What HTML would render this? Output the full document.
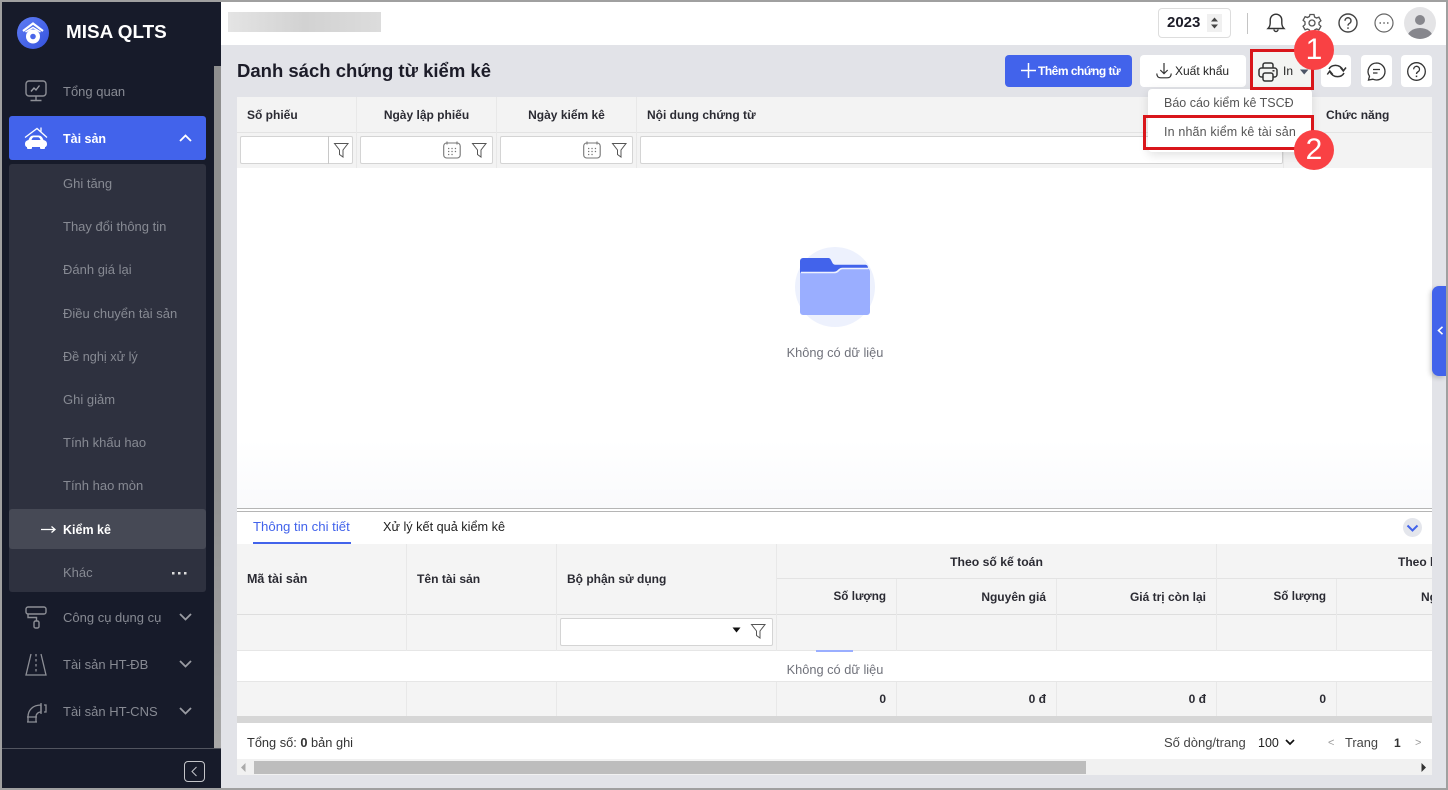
<!DOCTYPE html>
<html lang="vi"><head><meta charset="utf-8"><title>MISA QLTS</title>
<style>
*{box-sizing:border-box}
html,body{margin:0;padding:0;width:1448px;height:790px;overflow:hidden;background:#e2e3e8;font-family:"Liberation Sans",sans-serif;font-size:12.5px;color:#2a2a35}
.a{position:absolute}
.t{position:absolute;white-space:nowrap;line-height:16px}
.b{font-weight:700}
.m{color:#878a93;font-size:13px}
.h{font-weight:700;color:#2b2b33;font-size:12px}
.r{text-align:right}
.c{text-align:center}
svg{position:absolute;overflow:visible}
.inp{position:absolute;background:#fff;border:1px solid #d4d4d4;border-radius:2px;height:28px}
.btn{position:absolute;background:#fff;border-radius:4px;height:32px}
.v{position:absolute;width:1px;background:#e8e8e8}
.ln{position:absolute;height:1px;background:#e3e3e3}
</style></head><body>
<!-- topbar -->
<div class="a" style="left:221px;top:2px;width:1225px;height:43px;background:#fff"></div>
<div class="a" style="left:228px;top:12px;width:153px;height:20px;background:linear-gradient(90deg,#e4e4e4,#d2d2d2 50%,#dcdcdc)"></div>
<div class="a" style="left:1158px;top:8px;width:73px;height:30px;border:1px solid #ddd;border-radius:4px;background:#fff"></div>
<div class="t b" style="left:1167px;top:15px;font-size:15px;color:#1d1d28">2023</div>
<div class="a" style="left:1207px;top:14px;width:15px;height:18px;background:#f0f0f0"></div>
<svg style="left:1207px;top:14px" width="15" height="18"><path d="M7.500 3.500L11 7.500H4zM7.500 14.500L11 10.500H4z" fill="#444"/></svg>
<div class="a" style="left:1247px;top:13px;width:1px;height:21px;background:#c4c4c4"></div>
<svg style="left:1266px;top:12px" width="20" height="22" fill="none" stroke="#333" stroke-width="1.400"><path d="M2 16.500c1.500-1.500 2.200-3 2.200-5.500V8a5.800 5.800 0 0 1 11.600 0v3c0 2.500.7 4 2.200 5.500z"/><path d="M8 17.500a2 2 0 0 0 4 0" /></svg>
<svg style="left:1302px;top:13px" width="20" height="20" fill="none" stroke="#555" stroke-width="1.300"><path d="M8 1.500h4l.6 2.500 1.900 1 2.400-.8 2 3.500-1.900 1.700v2.200l1.900 1.700-2 3.500-2.400-.8-1.900 1-.6 2.500H8l-.6-2.500-1.900-1-2.400.8-2-3.500 1.900-1.700V8.900L1.100 7.200l2-3.500 2.400.8 1.900-1z"/><circle cx="10" cy="10" r="3"/></svg>
<svg style="left:1338px;top:13px" width="20" height="20" fill="none" stroke="#444" stroke-width="1.400"><circle cx="10" cy="10" r="9"/><path d="M7 7.800a3 3 0 1 1 4.600 2.500c-1 .6-1.600 1.100-1.600 2.300"/><path d="M10 14.400v1.400" stroke-width="1.600"/></svg>
<svg style="left:1374px;top:13px" width="20" height="20" fill="none" stroke="#666" stroke-width="1.200"><circle cx="10" cy="10" r="9"/><path d="M5.500 10h1.500M9.300 10h1.500M13 10h1.500" stroke-width="1.500"/></svg>
<svg style="left:1404px;top:7px" width="32" height="32"><defs><clipPath id="av"><circle cx="16" cy="16" r="16"/></clipPath></defs><circle cx="16" cy="16" r="16" fill="#e4e4e6"/><g clip-path="url(#av)" fill="#87878d"><circle cx="16" cy="13" r="5"/><ellipse cx="16" cy="31" rx="13" ry="10"/></g></svg>

<!-- toolbar -->
<div class="t b" style="left:237px;top:61px;font-size:18.500px;line-height:20px;color:#1c1c28">Danh sách chứng từ kiểm kê</div>
<div class="a" style="left:1005px;top:55px;width:127px;height:32px;background:#4263eb;border-radius:4px"></div>
<svg style="left:1021px;top:63px" width="15" height="15" fill="none" stroke="#fff" stroke-width="1.500"><path d="M7.500 0v15M0 7.500h15"/></svg>
<div class="t b" style="left:1038px;top:63px;color:#fff;font-size:12px;letter-spacing:-.5px">Thêm chứng từ</div>
<div class="btn" style="left:1140px;top:55px;width:106px"></div>
<svg style="left:1156px;top:63px" width="16" height="16" fill="none" stroke="#333" stroke-width="1.200"><path d="M8 0v10.500M4.300 7l3.700 3.700L11.700 7"/><path d="M.8 10.500c0 3 1.500 4.300 4 4.300h6.400c2.500 0 4-1.300 4-4.300"/></svg>
<div class="t" style="left:1175px;top:63px;font-size:12px;color:#222">Xuất khẩu</div>
<div class="a" style="left:1252px;top:52px;width:60px;height:37px;background:#f3f4f2;border-radius:3px"></div>
<svg style="left:1258px;top:62px" width="20" height="20" fill="none" stroke="#333" stroke-width="1.500"><path d="M5 6V3a2 2 0 0 1 2-2h6a2 2 0 0 1 2 2v3"/><rect x="1" y="6" width="18" height="9" rx="2.500"/><rect x="5" y="11" width="10" height="8" rx="2" fill="#f3f4f2"/><path d="M14.500 8.800h2" /></svg>
<div class="t" style="left:1283px;top:63px;font-size:12px;color:#222">In</div>
<svg style="left:1300px;top:69px" width="9" height="6"><path d="M0 .5h8.500L4.200 5.500z" fill="#4c5566"/></svg>
<div class="btn" style="left:1321px;top:55px;width:30px"></div>
<svg style="left:1327px;top:62px" width="19" height="18" fill="none" stroke="#333" stroke-width="1.500"><path d="M2 7C4 3 12 1 16 8"/><path d="M13.500 5.500L16.300 9 19 5.500"/><path d="M17 11C15 15 7 17 3 10"/><path d="M.3 12.500L2.800 9l2.900 3.500"/></svg>
<div class="btn" style="left:1361px;top:55px;width:31px"></div>
<svg style="left:1367px;top:62px" width="19" height="19" fill="none" stroke="#333" stroke-width="1.300"><path d="M9.500 1a8.500 8.500 0 0 1 0 17c-1.300 0-2.500-.3-3.600-.8L1.500 18l1-3.800A8.500 8.500 0 0 1 9.500 1z"/><path d="M6 7.500h7M6 11h4.500"/></svg>
<div class="btn" style="left:1401px;top:55px;width:31px"></div>
<svg style="left:1407px;top:62px" width="19" height="19" fill="none" stroke="#333" stroke-width="1.300"><circle cx="9.500" cy="9.500" r="8.800"/><path d="M6.700 7.300a2.900 2.900 0 1 1 4.400 2.400c-1 .6-1.600 1.100-1.600 2.300"/><path d="M9.500 13.600v1.500" stroke-width="1.500"/></svg>

<!-- top grid -->
<div class="a" style="left:237px;top:97px;width:1195px;height:71px;background:#f3f3f3"></div>
<div class="a" style="left:237px;top:168px;width:1195px;height:340px;background:linear-gradient(#fff 80%,#f9fafc)"></div>
<div class="ln" style="left:237px;top:132px;width:1195px"></div>
<div class="v" style="left:356px;top:97px;height:71px"></div>
<div class="v" style="left:496px;top:97px;height:71px"></div>
<div class="v" style="left:636px;top:97px;height:71px"></div>
<div class="v" style="left:1283px;top:97px;height:71px"></div>
<div class="t h" style="left:247px;top:107px">Số phiếu</div>
<div class="t h c" style="left:357px;top:107px;width:139px">Ngày lập phiếu</div>
<div class="t h c" style="left:497px;top:107px;width:139px">Ngày kiểm kê</div>
<div class="t h" style="left:647px;top:107px">Nội dung chứng từ</div>
<div class="t h" style="left:1326px;top:107px">Chức năng</div>
<div class="inp" style="left:240px;top:136px;width:113px"></div>
<div class="a" style="left:328px;top:136px;width:1px;height:28px;background:#c8c8c8"></div>
<div class="inp" style="left:360px;top:136px;width:133px"></div>
<div class="inp" style="left:500px;top:136px;width:133px"></div>
<div class="inp" style="left:640px;top:136px;width:643px"></div>
<svg style="left:334px;top:143px" width="15" height="15" fill="none" stroke="#555" stroke-width="1"><path d="M.5 .5h13.500L9 7v7l-3.500-2.500V7z"/></svg>
<svg style="left:472px;top:143px" width="15" height="15" fill="none" stroke="#555" stroke-width="1"><path d="M.5 .5h13.500L9 7v7l-3.500-2.500V7z"/></svg>
<svg style="left:612px;top:143px" width="15" height="15" fill="none" stroke="#555" stroke-width="1"><path d="M.5 .5h13.500L9 7v7l-3.500-2.500V7z"/></svg>
<svg style="left:443px;top:141px" width="18" height="18" fill="none" stroke="#777" stroke-width="1.100"><rect x=".7" y="2" width="16.500" height="15" rx="3"/><path d="M4 .5v3M14 .5v3"/><path d="M5 7.500h1.300M8.400 7.500h1.300M11.800 7.500h1.300M5 10.500h1.300M8.400 10.500h1.300M11.800 10.500h1.300M5 13.500h1.300M8.400 13.500h1.300" stroke-width="1.200"/></svg>
<svg style="left:583px;top:141px" width="18" height="18" fill="none" stroke="#777" stroke-width="1.100"><rect x=".7" y="2" width="16.500" height="15" rx="3"/><path d="M4 .5v3M14 .5v3"/><path d="M5 7.500h1.300M8.400 7.500h1.300M11.800 7.500h1.300M5 10.500h1.300M8.400 10.500h1.300M11.800 10.500h1.300M5 13.500h1.300M8.400 13.500h1.300" stroke-width="1.200"/></svg>

<!-- empty state -->
<div class="a" style="left:795px;top:247px;width:80px;height:80px;border-radius:50%;background:#edf1fd"></div>
<svg style="left:800px;top:258px" width="70" height="57"><path d="M0 3a3 3 0 0 1 3-3h25c2 0 2.500 1 3.500 3l1 2c.6 1.200 1.500 1.700 3 1.700H65c2 0 2.800 1 3 3v5H0z" fill="#4263eb"/><path d="M0 14.500h34c2 0 3-.5 4-1.500l1-1c1-1 2.200-1.500 3.500-1.500H67a3 3 0 0 1 3 3V54a3 3 0 0 1-3 3H3a3 3 0 0 1-3-3z" fill="#9aaeff"/><path d="M1 14.500h33c2 0 3-.5 4-1.500l1-1c1-1 2.200-1.500 3.500-1.500H68" fill="none" stroke="#eef1fd" stroke-width="1.600"/></svg>
<div class="t c" style="left:735px;top:345px;width:200px;color:#70727b;font-size:12.800px">Không có dữ liệu</div>

<!-- lower panel -->
<div class="a" style="left:237px;top:508px;width:1195px;height:1px;background:#b5b5b5"></div>
<div class="a" style="left:237px;top:509px;width:1195px;height:2px;background:#fff"></div>
<div class="a" style="left:237px;top:511px;width:1195px;height:1px;background:#b5b5b5"></div>
<div class="a" style="left:237px;top:512px;width:1195px;height:32px;background:#fff"></div>
<div class="t" style="left:253px;top:519px;color:#4263eb;font-size:13.200px">Thông tin chi tiết</div>
<div class="a" style="left:253px;top:542px;width:98px;height:2px;background:#4263eb"></div>
<div class="t" style="left:383px;top:519px;color:#222;font-size:12.700px">Xử lý kết quả kiểm kê</div>
<div class="a" style="left:1403px;top:518px;width:19px;height:19px;border-radius:50%;background:#e4e6ec"></div>
<svg style="left:1406px;top:524px" width="13" height="9" fill="none" stroke="#4263eb" stroke-width="2"><path d="M1.500 1.500L6.500 6.500l5-5"/></svg>

<div class="a" style="left:237px;top:544px;width:1195px;height:107px;background:#f4f4f4"></div>
<div class="a" style="left:237px;top:651px;width:1195px;height:30px;background:#fff"></div>
<div class="a" style="left:237px;top:682px;width:1195px;height:34px;background:#f4f4f4"></div>
<div class="a" style="left:237px;top:716px;width:1195px;height:7px;background:#d6d6d6"></div>
<div class="a" style="left:237px;top:723px;width:1195px;height:37px;background:#fff"></div>
<div class="a" style="left:237px;top:759px;width:1195px;height:16px;background:#f1f1f1"></div>
<div class="a" style="left:254px;top:761px;width:832px;height:13px;background:#bdbdbd"></div>
<svg style="left:241px;top:763px" width="5" height="9"><path d="M4.500 0v9L0 4.500z" fill="#aaa"/></svg>
<svg style="left:1421px;top:763px" width="5" height="9"><path d="M.5 0v9L5 4.500z" fill="#333"/></svg>
<div class="ln" style="left:237px;top:614px;width:1195px;background:#dedede"></div>
<div class="ln" style="left:237px;top:650px;width:1195px;background:#e6e6e6"></div>
<div class="ln" style="left:237px;top:681px;width:1195px;background:#e6e6e6"></div>
<div class="ln" style="left:777px;top:578px;width:655px;background:#e3e3e3"></div>
<div class="v" style="left:406px;top:544px;height:107px"></div>
<div class="v" style="left:556px;top:544px;height:107px"></div>
<div class="v" style="left:776px;top:544px;height:107px"></div>
<div class="v" style="left:896px;top:579px;height:72px"></div>
<div class="v" style="left:1056px;top:579px;height:72px"></div>
<div class="v" style="left:1216px;top:544px;height:107px"></div>
<div class="v" style="left:1336px;top:579px;height:72px"></div>
<div class="v" style="left:406px;top:682px;height:34px"></div>
<div class="v" style="left:556px;top:682px;height:34px"></div>
<div class="v" style="left:776px;top:682px;height:34px"></div>
<div class="v" style="left:896px;top:682px;height:34px"></div>
<div class="v" style="left:1056px;top:682px;height:34px"></div>
<div class="v" style="left:1216px;top:682px;height:34px"></div>
<div class="v" style="left:1336px;top:682px;height:34px"></div>
<div class="t h" style="left:247px;top:571px;font-size:12.500px">Mã tài sản</div>
<div class="t h" style="left:417px;top:571px;font-size:12.100px">Tên tài sản</div>
<div class="t h" style="left:567px;top:571px">Bộ phận sử dụng</div>
<div class="t h c" style="left:777px;top:554px;width:439px;font-size:12.200px">Theo số kế toán</div>
<div class="t h" style="left:1398px;top:554px;width:34px;overflow:hidden">Theo kiểm kê</div>
<div class="t h r" style="left:777px;top:589px;width:109px;font-size:11.700px">Số lượng</div>
<div class="t h r" style="left:897px;top:589px;width:149px">Nguyên giá</div>
<div class="t h r" style="left:1057px;top:589px;width:149px">Giá trị còn lại</div>
<div class="t h r" style="left:1217px;top:589px;width:109px;font-size:11.700px">Số lượng</div>
<div class="t h" style="left:1349px;top:589px;width:83px;padding-left:72px;overflow:hidden">Nguyên</div>
<div class="inp" style="left:560px;top:618px;width:213px"></div>
<svg style="left:732px;top:627px" width="10" height="6"><path d="M.5 .5h8L4.500 5.500z" fill="#111"/></svg>
<svg style="left:751px;top:624px" width="15" height="15" fill="none" stroke="#555" stroke-width="1"><path d="M.5 .5h13.500L9 7v7l-3.500-2.500V7z"/></svg>
<div class="a" style="left:816px;top:650px;width:37px;height:2px;background:#9aaeff"></div>
<div class="t c" style="left:735px;top:662px;width:200px;color:#70727b;font-size:12.800px">Không có dữ liệu</div>
<div class="t h r" style="left:777px;top:691px;width:109px">0</div>
<div class="t h r" style="left:897px;top:691px;width:149px">0 đ</div>
<div class="t h r" style="left:1057px;top:691px;width:149px">0 đ</div>
<div class="t h r" style="left:1217px;top:691px;width:109px">0</div>
<div class="t" style="left:247px;top:735px;font-size:12.800px;color:#333">Tổng số: <b>0</b> bản ghi</div>
<div class="t" style="left:1164px;top:735px;font-size:13px;color:#444">Số dòng/trang</div>
<div class="t" style="left:1258px;top:735px;font-size:12.500px;color:#222">100</div>
<svg style="left:1285px;top:739px" width="10" height="7" fill="none" stroke="#111" stroke-width="1.700"><path d="M1 1l4 4 4-4"/></svg>
<div class="t" style="left:1328px;top:735px;font-size:11px;color:#999">&lt;</div>
<div class="t" style="left:1345px;top:735px;font-size:12.800px;color:#444">Trang</div>
<div class="t b" style="left:1394px;top:735px;font-size:12px;color:#333">1</div>
<div class="t" style="left:1415px;top:735px;font-size:11px;color:#999">&gt;</div>

<!-- right handle -->
<div class="a" style="left:1432px;top:286px;width:14px;height:90px;background:#4263eb;border-radius:7px 0 0 7px;box-shadow:-2px 2px 5px rgba(0,0,0,.18)"></div>
<svg style="left:1437px;top:326px" width="7" height="9" fill="none" stroke="#fff" stroke-width="1.600"><path d="M5.500 .8L1.500 4.500l4 3.700"/></svg>

<!-- dropdown -->
<div class="a" style="left:1148px;top:89px;width:164px;height:63px;background:#fff;border-radius:4px;box-shadow:0 3px 10px rgba(0,0,0,.12)"></div>
<div class="t" style="left:1164px;top:95px;font-size:12.500px;color:#555">Báo cáo kiểm kê TSCĐ</div>
<div class="t" style="left:1164px;top:124px;font-size:12.500px;letter-spacing:.15px;color:#555">In nhãn kiểm kê tài sản</div>
<div class="a" style="left:1143px;top:115px;width:171px;height:35px;border:3px solid #d9161b"></div>
<div class="a" style="left:1250px;top:49px;width:64px;height:41px;border:3px solid #d9161b"></div>
<div class="a" style="left:1294px;top:30px;width:40px;height:40px;border-radius:50%;background:#f94144"></div>
<div class="t c" style="left:1294px;top:30px;width:40px;line-height:40px;color:#fff;font-size:30px">1</div>
<div class="a" style="left:1294px;top:130px;width:40px;height:40px;border-radius:50%;background:#f94144"></div>
<div class="t c" style="left:1294px;top:130px;width:40px;line-height:40px;color:#fff;font-size:30px">2</div>

<!-- sidebar -->
<div class="a" style="left:2px;top:2px;width:219px;height:786px;background:#171b2a"></div>
<div class="a" style="left:214px;top:66px;width:7px;height:682px;background:linear-gradient(#8f8f8f 0,#8f8f8f 60%,#a8a8a8)"></div>
<div class="a" style="left:2px;top:748px;width:219px;height:1px;background:#52555f"></div>
<svg style="left:17px;top:17px" width="32" height="32"><defs><linearGradient id="lg" x1="0" y1="0" x2="1" y2="1"><stop offset="0" stop-color="#5f7df5"/><stop offset="1" stop-color="#3452dd"/></linearGradient></defs><circle cx="16" cy="16" r="16" fill="url(#lg)"/><path d="M6 14L16 6.500 26 14" fill="none" stroke="#fff" stroke-width="2.200"/><path d="M8.500 15L16 10.500 23.500 15" fill="none" stroke="#fff" stroke-width="1.600"/><circle cx="16" cy="19.500" r="7" fill="#fff"/><circle cx="16" cy="19.500" r="2.800" fill="#4a66ea"/></svg>
<div class="t b" style="left:66px;top:22px;font-size:18.900px;line-height:22px;color:#fff">MISA QLTS</div>

<svg style="left:25px;top:80px" width="22" height="22" fill="none" stroke="#8d8f96" stroke-width="1.400"><rect x="1" y="1" width="20" height="15" rx="3"/><path d="M11 16v4M5.500 20.500h11"/><path d="M6 11.500l3-3.500 2 2 3.500-4.500" stroke="#9a9ca3"/></svg>
<div class="t m" style="left:63px;top:84px">Tổng quan</div>
<div class="a" style="left:9px;top:116px;width:197px;height:44px;background:#4263eb;border-radius:3px"></div>
<svg style="left:25px;top:127px" width="22" height="22"><path d="M0 10.500L12 1.500l10 9M16 4.500V.5" fill="none" stroke="#fff" stroke-width="1.300"/><path d="M0 17c0-2.500 1.500-3.500 3.500-4 1.200-3 2.500-4.500 5-4.500h5c2.500 0 3.800 1.500 5 4.500 2 .5 3.500 1.500 3.500 4 0 1.800-.8 3-2 3H2c-1.200 0-2-1.200-2-3z" fill="#fff"/><path d="M6.500 13c.6-1.500 1.200-2.700 2.500-2.700h4c1.300 0 1.900 1.200 2.500 2.700z" fill="#4263eb"/><rect x="2" y="19" width="5" height="3" rx="1" fill="#fff"/><rect x="15" y="19" width="5" height="3" rx="1" fill="#fff"/></svg>
<div class="t b" style="left:63px;top:131px;color:#fff;font-size:12.500px">Tài sản</div>
<svg style="left:179px;top:134px" width="13" height="8" fill="none" stroke="#fff" stroke-width="1.800"><path d="M1 7l5.500-5.500L12 7"/></svg>
<div class="a" style="left:9px;top:164px;width:197px;height:428px;background:#2e313f;border-radius:3px"></div>
<div class="a" style="left:9px;top:509px;width:197px;height:40px;background:#464955;border-radius:3px"></div>
<div class="t m" style="left:63px;top:176px">Ghi tăng</div>
<div class="t m" style="left:63px;top:219px">Thay đổi thông tin</div>
<div class="t m" style="left:63px;top:262px">Đánh giá lại</div>
<div class="t m" style="left:63px;top:306px">Điều chuyển tài sản</div>
<div class="t m" style="left:63px;top:349px;font-size:12.700px">Đề nghị xử lý</div>
<div class="t m" style="left:63px;top:392px">Ghi giảm</div>
<div class="t m" style="left:63px;top:435px">Tính khấu hao</div>
<div class="t m" style="left:63px;top:478px">Tính hao mòn</div>
<svg style="left:41px;top:525px" width="15" height="9" fill="none" stroke="#fff" stroke-width="1.300"><path d="M0 4.500h14M10.500 1.500l3.500 3-3.500 3"/></svg>
<div class="t b" style="left:63px;top:522px;color:#fff;font-size:12.500px">Kiểm kê</div>
<div class="t m" style="left:63px;top:565px">Khác</div>
<svg style="left:172px;top:572px" width="15" height="3" fill="#ddd"><rect width="2.500" height="2.500"/><rect x="6" width="2.500" height="2.500"/><rect x="12" width="2.500" height="2.500"/></svg>
<svg style="left:25px;top:606px" width="22" height="23" fill="none" stroke="#8d8f96" stroke-width="1.400"><rect x="1" y="1" width="20" height="7" rx="2"/><path d="M3 8v3.500h8.500v3.500"/><rect x="9" y="15" width="5" height="7" rx="1.500"/></svg>
<div class="t m" style="left:63px;top:610px">Công cụ dụng cụ</div>
<svg style="left:179px;top:613px" width="13" height="8" fill="none" stroke="#9a9ca3" stroke-width="1.800"><path d="M1 1l5.500 5.500L12 1"/></svg>
<svg style="left:25px;top:653px" width="22" height="23" fill="none" stroke="#8d8f96" stroke-width="1.300"><path d="M6 1L1 22h20L16 1"/><path d="M11 1v20" stroke-dasharray="2.500 2.500"/></svg>
<div class="t m" style="left:63px;top:657px">Tài sản HT-ĐB</div>
<svg style="left:179px;top:660px" width="13" height="8" fill="none" stroke="#9a9ca3" stroke-width="1.800"><path d="M1 1l5.500 5.500L12 1"/></svg>
<svg style="left:26px;top:702px" width="22" height="21" fill="none" stroke="#8d8f96" stroke-width="1.300"><path d="M2 15c0-7 5-12 13-12v7c-3 0-5 2-5 5"/><path d="M15 1v11M18 3h2v7h-2M1 15h10M2 15v5M10 15v5M1 20h10"/></svg>
<div class="t m" style="left:63px;top:704px">Tài sản HT-CNS</div>
<svg style="left:179px;top:707px" width="13" height="8" fill="none" stroke="#9a9ca3" stroke-width="1.800"><path d="M1 1l5.500 5.500L12 1"/></svg>
<div class="a" style="left:184px;top:761px;width:21px;height:21px;border:1px solid #c4c5c9;border-radius:4px"></div>
<svg style="left:191px;top:766px" width="7" height="11" fill="none" stroke="#c4c5c9" stroke-width="1"><path d="M5.500 1L1 5.500 5.500 10"/></svg>

<!-- window frame -->
<div class="a" style="left:0;top:0;width:1448px;height:2px;background:#a0a0a0"></div>
<div class="a" style="left:0;top:788px;width:1448px;height:2px;background:#a0a0a0"></div>
<div class="a" style="left:0;top:0;width:2px;height:790px;background:#a0a0a0"></div>
<div class="a" style="left:1446px;top:0;width:2px;height:790px;background:#a0a0a0"></div>
</body></html>
